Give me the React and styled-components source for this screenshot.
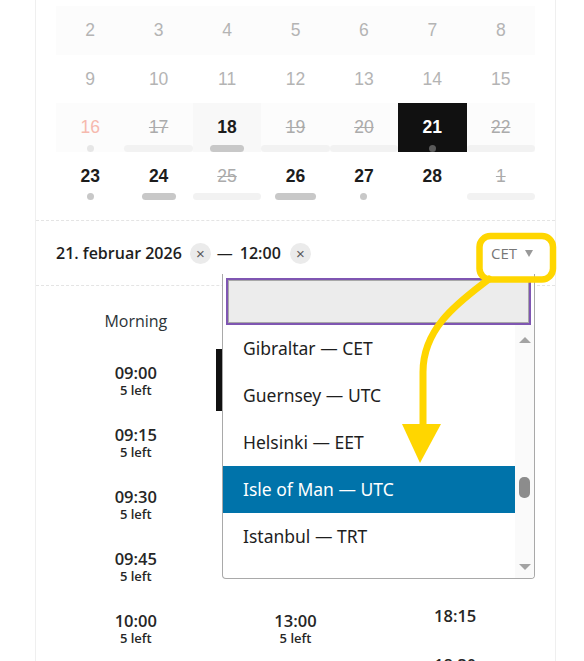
import React from 'react';
import styled, { createGlobalStyle } from 'styled-components';

const Global = createGlobalStyle`
  html, body { margin: 0; padding: 0; background: #fff; }
  body { font-family: "Open Sans", "Noto Sans", sans-serif; }
  #root { width: 584px; }
`;

const Page = styled.div`
  position: relative;
  width: 584px;
  height: 661px;
  overflow: hidden;
  background: #fff;
`;

const Panel = styled.div`
  margin-left: 35px;
  width: 521px;
  min-height: 661px;
  box-sizing: border-box;
  border-left: 1px solid #efefef;
  border-right: 1px solid #efefef;
  padding-top: 6px;
`;

const Calendar = styled.div`
  display: flex;
  flex-direction: column;
  margin: 0 20px 20px;
`;

const Week = styled.div`
  display: grid;
  grid-template-columns: repeat(7, 1fr);
  height: 48.5px;
  background: ${(p) => (p.$shaded ? '#fcfcfc' : 'transparent')};
`;

const Day = styled.div`
  display: flex;
  flex-direction: column;
  align-items: center;
  justify-content: space-between;
  box-sizing: border-box;
  padding-top: 14px;
  height: 100%;
  background: ${(p) => (p.$selected ? '#111' : p.$today ? '#f8f8f8' : 'transparent')};
`;

const dayColors = {
  past: '#b4b4b4',
  struck: '#ababab',
  open: '#1c1c1c',
  selected: '#fff',
  holiday: '#f6b9ae',
};

const DayNum = styled.span`
  font-family: "Liberation Sans", Arial, sans-serif;
  font-size: 17.5px;
  line-height: 20px;
  font-weight: ${(p) => (p.$kind === 'open' || p.$kind === 'selected' ? 700 : 400)};
  color: ${(p) => dayColors[p.$kind]};
  text-decoration: ${(p) => (p.$kind === 'struck' ? 'line-through' : 'none')};
`;

const Marker = styled.span`
  display: block;
  height: 7px;
  width: ${(p) => p.$w};
  border-radius: 4px;
  background: ${(p) => p.$c};
`;

const Divider = styled.div`
  border-top: 1px dashed #e4e4e4;
`;

const Header = styled.div`
  position: relative;
  display: flex;
  align-items: center;
  justify-content: space-between;
  height: 64px;
  padding: 0 22px 0 20px;
`;

const DateGroup = styled.div`
  display: flex;
  align-items: center;
`;

const DateText = styled.span`
  font-size: 16px;
  font-weight: 600;
  color: #1e1e1e;
  margin-right: ${(p) => p.$mr || 0}px;
`;

const Dash = styled.span`
  font-size: 16px;
  color: #1e1e1e;
  margin: 0 7px 0 6px;
`;

const Clear = styled.span`
  display: inline-flex;
  align-items: center;
  justify-content: center;
  width: 21px;
  height: 21px;
  border-radius: 50%;
  background: #ebebeb;
  color: #5a5a5a;
  font-family: "Liberation Sans", Arial, sans-serif;
  font-size: 15px;
  line-height: 1;
  margin-left: ${(p) => p.$ml || 0}px;
`;

const Zone = styled.span`
  display: flex;
  align-items: center;
  font-size: 15px;
  color: #777;
`;

const Caret = styled.span`
  width: 0;
  height: 0;
  margin-left: 8px;
  border-left: 4.5px solid transparent;
  border-right: 4.5px solid transparent;
  border-top: 7px solid #999;
`;

const Dropdown = styled.div`
  position: absolute;
  right: 20px;
  top: 53px;
  width: 313px;
  height: 305px;
  box-sizing: border-box;
  background: #fff;
  border: 1px solid #a9a9a9;
  border-top: none;
  border-radius: 0 0 4px 4px;
  display: flex;
  flex-direction: column;
  z-index: 5;
  overflow: hidden;
`;

const SearchWrap = styled.div`
  padding: 4px 3px 0;
`;

const Search = styled.div`
  height: 47px;
  box-sizing: border-box;
  border: 2px solid #7f56b2;
  box-shadow: inset 0 0 0 1px #a8a8a8;
  background: #ececec;
`;

const List = styled.div`
  flex: 1;
  display: flex;
  min-height: 0;
`;

const Options = styled.ul`
  flex: 1;
  margin: 0;
  padding: 0;
  list-style: none;
  overflow: hidden;
`;

const Option = styled.li`
  height: 47px;
  line-height: 47px;
  padding-left: 20px;
  font-family: "Noto Sans", "Open Sans", sans-serif;
  font-size: 17.5px;
  color: ${(p) => (p.$active ? '#fff' : '#1e1e1e')};
  background: ${(p) => (p.$active ? '#0073aa' : 'transparent')};
`;

const Scrollbar = styled.div`
  width: 19px;
  background: #fafafa;
  display: flex;
  flex-direction: column;
  align-items: center;
  padding: 12px 0 8px;
  box-sizing: border-box;
`;

const Arrow = styled.span`
  width: 0;
  height: 0;
  border-left: 6.5px solid transparent;
  border-right: 6.5px solid transparent;
  ${(p) => (p.$down ? 'border-top: 6px solid #a3a3a3;' : 'border-bottom: 6px solid #a3a3a3;')}
`;

const Track = styled.div`
  flex: 1;
  display: flex;
  flex-direction: column;
  align-items: center;
  padding-top: ${(p) => p.$offset}px;
`;

const Thumb = styled.span`
  width: 11px;
  height: 21px;
  border-radius: 5px;
  background: #8c8c8c;
`;

const Slots = styled.div`
  display: grid;
  grid-template-columns: repeat(3, 1fr);
  padding: 0 20px;
`;

const Column = styled.div`
  display: flex;
  flex-direction: column;
`;

const ColumnTitle = styled.div`
  padding: 24px 0 17px;
  text-align: center;
  font-size: 16px;
  line-height: 22px;
  color: #2c3338;
`;

const Slot = styled.div`
  box-sizing: border-box;
  height: ${(p) => (p.$compact ? '48.6px' : '62px')};
  padding-top: 14px;
  display: flex;
  flex-direction: column;
  align-items: center;
  background: ${(p) => (p.$selected ? '#111' : 'transparent')};
  color: ${(p) => (p.$selected ? '#fff' : '#262626')};
`;

const SlotTime = styled.span`
  font-size: 16.5px;
  font-weight: 600;
  line-height: 20px;
`;

const SlotLeft = styled.span`
  font-size: 13px;
  font-weight: 600;
  line-height: 14px;
`;

const Overlay = styled.svg`
  position: absolute;
  left: 0;
  top: 0;
  pointer-events: none;
  z-index: 10;
`;

const dot = (c) => ({ w: '7px', c });
const bar = (c, w) => ({ w, c });
const full = { w: '100%', c: '#f2f2f2' };

const weeks = [
  { shaded: true, days: [2, 3, 4, 5, 6, 7, 8].map((n) => ({ n, kind: 'past' })) },
  { shaded: false, days: [9, 10, 11, 12, 13, 14, 15].map((n) => ({ n, kind: 'past' })) },
  {
    shaded: true,
    days: [
      { n: 16, kind: 'holiday', m: dot('#e6e6e6') },
      { n: 17, kind: 'struck', m: full },
      { n: 18, kind: 'open', today: true, m: bar('#c8c8c8', '34px') },
      { n: 19, kind: 'struck', m: full },
      { n: 20, kind: 'struck', m: full },
      { n: 21, kind: 'selected', selected: true, m: dot('#5a5a5a') },
      { n: 22, kind: 'struck', m: full },
    ],
  },
  {
    shaded: false,
    days: [
      { n: 23, kind: 'open', m: dot('#c8c8c8') },
      { n: 24, kind: 'open', m: bar('#c8c8c8', '34px') },
      { n: 25, kind: 'struck', m: full },
      { n: 26, kind: 'open', m: bar('#c8c8c8', '41px') },
      { n: 27, kind: 'open', m: dot('#c8c8c8') },
      { n: 28, kind: 'open' },
      { n: 1, kind: 'struck', m: full },
    ],
  },
];

const zones = [
  'Gibraltar — CET',
  'Guernsey — UTC',
  'Helsinki — EET',
  'Isle of Man — UTC',
  'Istanbul — TRT',
];

const columns = [
  { title: 'Morning', slots: ['09:00', '09:15', '09:30', '09:45', '10:00', '10:15'].map((t) => ({ t, left: '5 left' })) },
  {
    title: 'Afternoon',
    slots: [
      { t: '12:00', left: '5 left', selected: true },
      { t: '12:15', left: '5 left' },
      { t: '12:30', left: '5 left' },
      { t: '12:45' },
      { t: '13:00', left: '5 left' },
      { t: '13:15', left: '5 left' },
    ],
  },
  {
    title: 'Evening',
    compact: true,
    slots: ['17:00', '17:15', '17:30', '17:45', '18:00', '18:15', '18:30', '18:45'].map((t) => ({ t })),
  },
];

export default function App() {
  return (
    <Page>
      <Global />
      <Panel>
        <Calendar>
          {weeks.map((w, wi) => (
            <Week key={wi} $shaded={w.shaded}>
              {w.days.map((d) => (
                <Day key={d.n} $selected={d.selected} $today={d.today}>
                  <DayNum $kind={d.kind}>{d.n}</DayNum>
                  {d.m ? <Marker $w={d.m.w} $c={d.m.c} /> : <span />}
                </Day>
              ))}
            </Week>
          ))}
        </Calendar>
        <Divider />
        <Header>
          <DateGroup>
            <DateText $mr={8}>21. februar 2026</DateText>
            <Clear>×</Clear>
            <Dash>—</Dash>
            <DateText>12:00</DateText>
            <Clear $ml={9}>×</Clear>
          </DateGroup>
          <Zone>
            CET
            <Caret />
          </Zone>
          <Dropdown>
            <SearchWrap>
              <Search />
            </SearchWrap>
            <List>
              <Options>
                {zones.map((z) => (
                  <Option key={z} $active={z.startsWith('Isle')}>
                    {z}
                  </Option>
                ))}
              </Options>
              <Scrollbar>
                <Arrow />
                <Track $offset={134}>
                  <Thumb />
                </Track>
                <Arrow $down />
              </Scrollbar>
            </List>
          </Dropdown>
        </Header>
        <Divider />
        <Slots>
          {columns.map((c) => (
            <Column key={c.title}>
              <ColumnTitle>{c.title}</ColumnTitle>
              {c.slots.map((s) => (
                <Slot key={s.t} $compact={c.compact} $selected={s.selected}>
                  <SlotTime>{s.t}</SlotTime>
                  {s.left && <SlotLeft>{s.left}</SlotLeft>}
                </Slot>
              ))}
            </Column>
          ))}
        </Slots>
      </Panel>
      <Overlay width="584" height="661" viewBox="0 0 584 661">
        <rect x="479.5" y="236" width="73.5" height="43.5" rx="11" fill="none" stroke="#ffd600" strokeWidth="6.5" />
        <path
          d="M489 279 C 462 300, 423 326, 423 372 L 423 428"
          fill="none"
          stroke="#ffd600"
          strokeWidth="7"
          strokeLinecap="round"
        />
        <polygon points="402,424 441,424 420,463" fill="#ffd600" />
      </Overlay>
    </Page>
  );
}
